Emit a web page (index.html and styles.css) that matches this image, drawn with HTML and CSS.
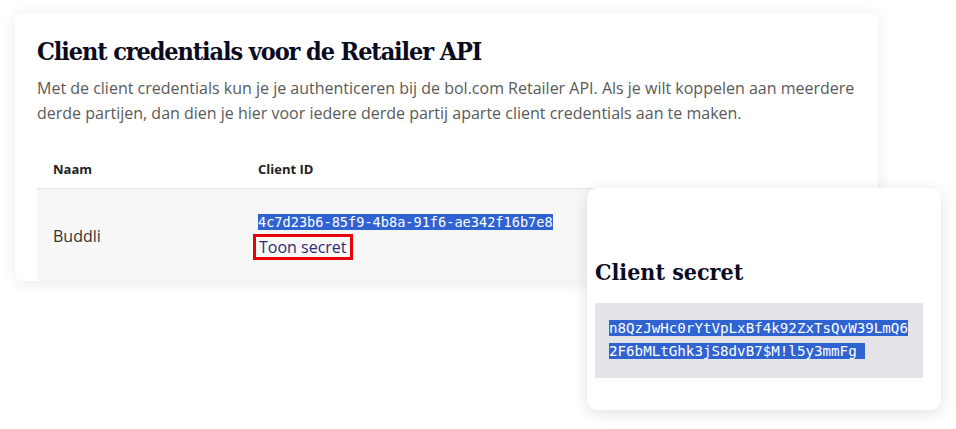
FILE: index.html
```html
<!DOCTYPE html>
<html lang="nl">

<head>
    <meta charset="UTF-8">
    <meta name="viewport" content="width=device-width, initial-scale=1.0">
    <title>Client credentials</title>
    <link rel="stylesheet" href="styles.css">
</head>

<body>
    <div class="card">
        <h1 class="title">Client credentials voor de Retailer API</h1>
        <p class="intro">Met de client credentials kun je je authenticeren bij de bol.com Retailer API. Als je wilt koppelen aan meerdere<br>derde partijen, dan dien je hier voor iedere derde partij aparte client credentials aan te maken.</p>

        <table class="creds">
            <thead>
                <tr>
                    <th class="col-name">Naam</th>
                    <th>Client ID</th>
                </tr>
            </thead>
            <tbody>
                <tr>
                    <td class="col-name">Buddli</td>
                    <td>
                        <div class="client-id"><span class="selected">4c7d23b6-85f9-4b8a-91f6-ae342f16b7e8</span></div>
                        <a class="show-secret" href="#">Toon secret</a>
                    </td>
                </tr>
            </tbody>
        </table>
    </div>

    <!-- popup met het secret -->
    <div class="secret-card">
        <h2 class="secret-title">Client secret</h2>
        <div class="secret-box">
            <span class="selected">n8QzJwHc0rYtVpLxBf4k92ZxTsQvW39LmQ6 <br>2F6bMLtGhk3jS8dvB7$M!l5y3mmFg&nbsp;</span>
        </div>
    </div>
</body>

</html>
```

FILE: styles.css
```css
body {
    margin: 0;
    background-color: white;
    font-family: "Open Sans", "Liberation Sans", sans-serif;
    position: relative;
    height: 429px;
    overflow: hidden;
}

.card {
    margin-top: 13px;
    margin-left: 15px;
    width: 841px;
    height: 268px;
    padding-left: 22px;
    background-color: white;
    border-radius: 8px;
    box-shadow: 0 2px 16px rgba(0, 0, 0, 0.09);
    overflow: hidden;
}

.title {
    margin: 0;
    padding-top: 24px;
    font-family: "DejaVu Serif Condensed", "DejaVu Serif", serif;
    font-stretch: condensed;
    font-size: 25px;
    line-height: 30px;
    color: #0b0b1f;
    letter-spacing: -1.1px;
}

.intro {
    margin: 9px 0 0 0;
    font-size: 16px;
    line-height: 25px;
    color: #5a5a5a;
}

.creds {
    margin-top: 24px;
    width: 100%;
    border-collapse: collapse;
}

.creds th {
    text-align: left;
    font-size: 13px;
    font-weight: 700;
    color: #222;
    height: 38px;
    padding: 0;
    border-bottom: 1px solid #e6e6e6;
}

.creds td {
    background-color: #f7f7f7;
    height: 93px;
    padding: 0;
    vertical-align: middle;
    font-size: 16px;
    color: #333;
}

.creds .col-name {
    width: 205px;
    padding-left: 16px;
}

.client-id {
    font-family: "DejaVu Sans Mono", monospace;
    font-size: 13.6px;
    line-height: 22px;
}

.selected {
    background-color: #2f63d2;
    color: white;
}

.show-secret {
    display: inline-block;
    margin-top: 1px;
    margin-left: -5px;
    padding: 0 3px;
    border: 3px solid #e8000b;
    color: #2e2b74;
    text-decoration: none;
    font-size: 16px;
    line-height: 20px;
}

.secret-card {
    position: absolute;
    left: 587px;
    top: 188px;
    width: 346px;
    height: 222px;
    padding-left: 8px;
    background-color: white;
    border-radius: 10px;
    box-shadow: 0 3px 16px rgba(0, 0, 0, 0.12);
}

.secret-title {
    margin: 0;
    padding-top: 70px;
    font-family: "DejaVu Serif Condensed", "DejaVu Serif", serif;
    font-stretch: condensed;
    font-size: 23px;
    line-height: 28px;
    color: #0b0b1f;
    letter-spacing: 0;
}

.secret-box {
    margin-top: 17px;
    width: 314px;
    padding: 14px 0 15px 14px;
    background-color: #e4e4e8;
    font-family: "DejaVu Sans Mono", monospace;
    font-size: 14.2px;
    line-height: 23px;
}
```
